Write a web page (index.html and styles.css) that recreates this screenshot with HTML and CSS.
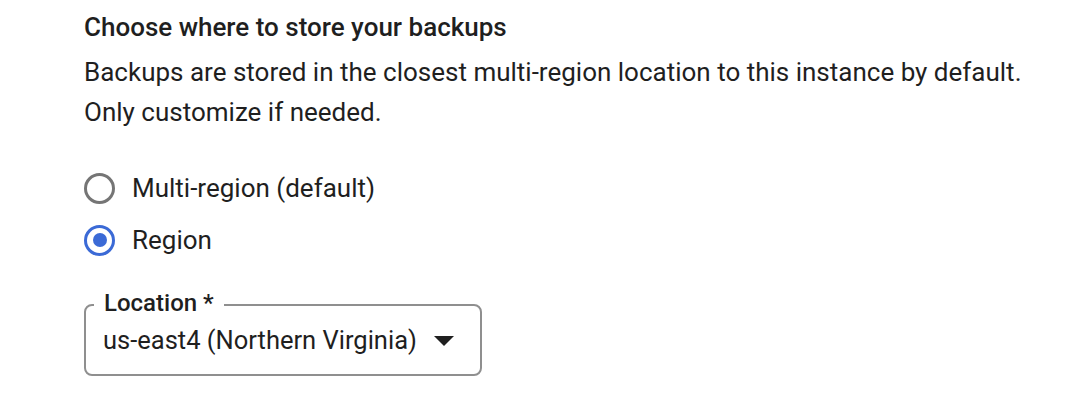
FILE: index.html
```html
<!DOCTYPE html>
<html>
<head>
<meta charset="utf-8">
<link rel="stylesheet" href="styles.css">
</head>
<body>
<div class="panel">
  <h2 class="title">Choose where to store your backups</h2>
  <p class="desc">Backups are stored in the closest multi-region location to this instance by default.<br>Only customize if needed.</p>
  <div class="radios">
    <label class="radio"><span class="dot"></span><span class="rlabel">Multi-region (default)</span></label>
    <label class="radio checked"><span class="dot"></span><span class="rlabel">Region</span></label>
  </div>
  <div class="field">
    <span class="flabel">Location *</span>
    <div class="fvalue"><span>us-east4 (Northern Virginia)</span><span class="caret"></span></div>
  </div>
</div>
</body>
</html>
```
FILE: styles.css
```css
html, body { margin: 0; padding: 0; background: #fff; }
body { font-family: Roboto, "Noto Sans", sans-serif; color: #1f1f1f; }
.panel { padding: 10px 0 0 84px; }
.title { margin: 0; font-size: 26px; font-weight: 500; line-height: 34px; }
.desc { margin: 8px 0 0; font-size: 26px; line-height: 40px; }
.radios { margin-top: 40px; display: flex; flex-direction: column; gap: 20px; }
.radio { display: flex; align-items: center; height: 32px; font-size: 26px; }
.dot { box-sizing: border-box; width: 31px; height: 31px; border-radius: 50%; border: 3px solid #757575; margin-right: 17px; position: relative; }
.checked .dot { border-color: #3b6ad6; }
.checked .dot::after { content: ""; position: absolute; left: 5.5px; top: 5.5px; width: 14px; height: 14px; border-radius: 50%; background: #3b6ad6; }
.field { position: relative; margin-top: 48px; width: 398px; box-sizing: border-box; height: 72px; border: 2px solid #8f8f8f; border-radius: 8px; }
.flabel { position: absolute; left: 8px; top: -19px; padding: 0 10px; background: #fff; font-size: 24px; font-weight: 500; line-height: 32px; }
.fvalue { display: flex; align-items: center; height: 100%; padding-left: 17px; font-size: 25.5px; }
.caret { width: 0; height: 0; border-left: 10px solid transparent; border-right: 10px solid transparent; border-top: 10px solid #1f1f1f; margin-left: 17px; margin-top: 1px; }
```
